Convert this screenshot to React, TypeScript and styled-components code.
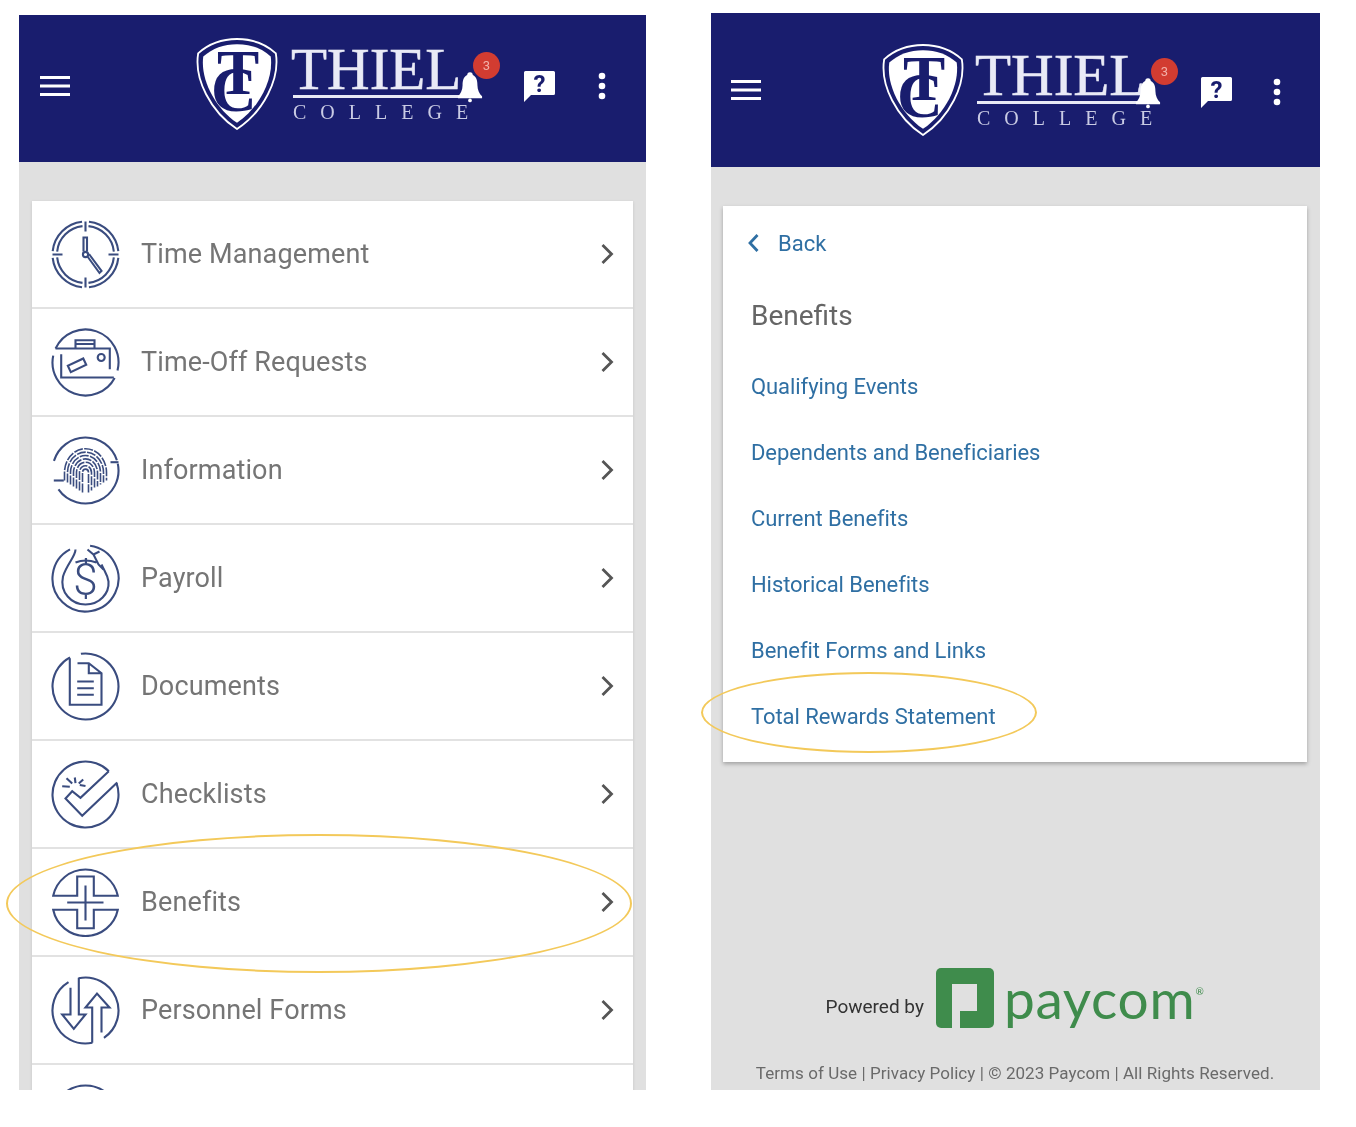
import * as React from 'react';
import { createGlobalStyle, styled } from 'styled-components';

const NAVY = '#191d6e';
const ICON = '#3a4c7f';
const LINK = '#2f6fa3';

const GlobalStyle = createGlobalStyle`
  html, body {
    margin: 0;
    background: #fff;
  }
  body {
    font-family: Roboto, "Liberation Sans", sans-serif;
  }
`;

//arc around the middle of a 68 unit icon, degrees run clockwise from the top
const arc = (r: number, from: number, to: number) => {
  const pt = (deg: number) => {
    const rad = (deg * Math.PI) / 180;
    return `${(34 + r * Math.sin(rad)).toFixed(2)} ${(34 - r * Math.cos(rad)).toFixed(2)}`;
  };
  return `M${pt(from)} A${r} ${r} 0 ${to - from > 180 ? 1 : 0} 1 ${pt(to)}`;
};

const ClockIcon = () => (
  <>
    {[
      [6, 84],
      [96, 174],
      [186, 264],
      [276, 354],
    ].map(([a, b]) => (
      <React.Fragment key={a}>
        <path d={arc(33, a, b)} />
        <path d={arc(28.5, a, b)} />
      </React.Fragment>
    ))}
    <path d="M34 1V11M34 57V67M1 34H11M57 34H67" />
    <path d="M32 31V17H35.5V31" />
    <circle cx="34" cy="34" r="2.6" />
    <path d="M36 36L48 52.5L50 50.5L37.5 33.5" />
  </>
);

const SuitcaseIcon = () => (
  <>
    <path d={arc(33, -65, 104)} />
    <path d={arc(33, 118, 282)} />
    <path d="M4 20H58.3V40.7M9.7 25.7V49H62.3M24 20V11.7H43V20M24 15.5H43" />
    <rect x="17" y="33.2" width="17" height="7" transform="rotate(-25 25.7 36.7)" />
    <circle cx="49.7" cy="29" r="3.5" />
  </>
);

const FingerprintIcon = () => (
  <>
    <path d="M2.3 44H12.3" />
    <path d={arc(33, -73, 72)} />
    <path d="M59 25.7H67" />
    <path d={arc(33, 78, 235)} />
    {[1, 2, 3, 4, 5, 6, 7].map((k) => (
      <path
        key={k}
        d={`M${34 - k * 3} ${58 - k * 2}V36A${k * 3} ${k * 3.4} 0 0 1 ${34 + k * 3} 36V${58 - k * 2}`}
        strokeDasharray="9 1.4"
        strokeWidth="1.6"
      />
    ))}
  </>
);

const MoneyIcon = () => (
  <>
    <path d={arc(33, 8, 332)} />
    <path d="M24 5C24 12 15 20 11.5 32C8 48 20 60 34 60C48 60 58 49 57 37C56 30 53 27 50 20" />
    <path d="M24 18Q34 14 45 18M36 5L42 10L48 7M42 10L47 20L52 25" />
    <BagText x="34" y="50">$</BagText>
  </>
);

const DocumentIcon = () => (
  <>
    <path d={arc(33, -8, 332)} />
    <path d="M18.3 5.7V52.3H50V20.7L37.3 10.7H26M37.3 10.7V20.7H50" />
    <path d="M25.7 29H42.3M25.7 35.7H42.3M25.7 42.3H42.3" />
  </>
);

const CheckIcon = () => (
  <>
    <path d={arc(33, 70, 405)} />
    <path d="M57.3 10.7L29 37.3L20.7 30.7L14 38L30.7 55.3L65.7 22" />
    <path d="M10.7 25.7L18.3 26.3M15 17.7L20.7 23M23.3 17L24 22.7M31.7 19L27.3 23M34 25.5L28.3 24.5" />
  </>
);

const CrossIcon = () => (
  <>
    <path d="M1.7 27.3H25.7V8H42.3V27.3H66.3A33 33 0 0 0 1.7 27.3Z" />
    <path d="M1.7 41.3H25.7V59.7H42.3V41.3H66.3A33 33 0 0 1 1.7 41.3Z" />
    <path d="M34 17V52M15.7 34H52" />
  </>
);

const ArrowsIcon = () => (
  <>
    <path d={arc(33, 168, 329)} />
    <path d={arc(33, 348, 506)} />
    <path d="M40.7 66.3V31H34L45.5 17L58 31H50V56" />
    <path d="M19 11.3V38H10.7L22.3 52.3L34 38H27.3V1.3" />
  </>
);

const RingIcon = () => <circle cx="34" cy="34" r="33" />;

const MENU = [
  { label: 'Time Management', Icon: ClockIcon },
  { label: 'Time-Off Requests', Icon: SuitcaseIcon },
  { label: 'Information', Icon: FingerprintIcon },
  { label: 'Payroll', Icon: MoneyIcon },
  { label: 'Documents', Icon: DocumentIcon },
  { label: 'Checklists', Icon: CheckIcon },
  { label: 'Benefits', Icon: CrossIcon },
  { label: 'Personnel Forms', Icon: ArrowsIcon },
  { label: '', Icon: RingIcon },
];

const BENEFIT_LINKS = [
  'Qualifying Events',
  'Dependents and Beneficiaries',
  'Current Benefits',
  'Historical Benefits',
  'Benefit Forms and Links',
  'Total Rewards Statement',
];

type HeaderProps = {
  height: number;
  padding: string;
  logoLeft: number;
  logoGap: number;
  logoLift: number;
  bellShift: number;
  iconDrop: number;
  kebabGap: number;
};

const Header = ({ height, padding, logoLeft, logoGap, logoLift, bellShift, iconDrop, kebabGap }: HeaderProps) => (
  <TopBar $height={height} $padding={padding}>
    <svg width="30" height="22" viewBox="0 0 30 22">
      <path d="M0 2.5H30M0 11H30M0 19.5H30" stroke="#fff" strokeWidth="3" />
    </svg>
    <Logo $left={logoLeft} $gap={logoGap} $lift={logoLift}>
      <svg width="84" height="92" viewBox="0 0 80 90">
        <path
          d="M40 1C55 1 68 6 78 15C82 40 66 72 40 89C14 72 -2 40 2 15C12 6 25 1 40 1Z"
          fill="none"
          stroke="#fff"
          strokeWidth="1.8"
        />
        <path
          d="M40 6C53 6 64 10 73 18C76 40 62 68 40 83C18 68 4 40 7 18C16 10 27 6 40 6Z"
          fill="#fff"
        />
        <CrestText x="37" y="71" fontSize="62">C</CrestText>
        <CrestText x="41" y="55" fontSize="62">T</CrestText>
      </svg>
      <Wordmark>
        <Thiel>THIEL</Thiel>
        <WordRule />
        <College>COLLEGE</College>
        <Bell $shift={bellShift} width="26" height="34" viewBox="0 0 28 34">
          <path
            d="M14 1C16 1 17 2.500 17 4C21 6 22 10 22 15C22 20 24 24 27 27V29H1V27C4 24 6 20 6 15C6 10 7 6 11 4C11 2.500 12 1 14 1Z"
            fill="#fff"
          />
          <circle cx="14" cy="31.500" r="2" fill="#fff" />
        </Bell>
        <Badge $shift={bellShift}>3</Badge>
      </Wordmark>
    </Logo>
    <HelpIcon $drop={iconDrop} width="33" height="33" viewBox="0 0 33 33">
      <path d="M2.500 1H30.500Q32 1 32 2.500V23.500Q32 25 30.500 25H8L1 32V2.500Q1 1 2.500 1Z" fill="#fff" />
      <HelpMark x="16.500" y="22">?</HelpMark>
    </HelpIcon>
    <KebabIcon $drop={iconDrop} $gap={kebabGap} width="8" height="28" viewBox="0 0 8 28">
      <circle cx="4" cy="4" r="3.300" fill="#fff" />
      <circle cx="4" cy="14" r="3.300" fill="#fff" />
      <circle cx="4" cy="24" r="3.300" fill="#fff" />
    </KebabIcon>
  </TopBar>
);

export default function App() {
  return (
    <Page>
      <GlobalStyle />
      <LeftPhone>
        <Header
          height={147}
          padding="0 40px 5px 21px"
          logoLeft={125}
          logoGap={12}
          logoLift={4}
          bellShift={0}
          iconDrop={0}
          kebabGap={42}
        />
        <PhoneBody>
          <MenuCard>
            {MENU.map(({ label, Icon }) => (
              <MenuRow key={label || 'more'}>
                <MenuIcon viewBox="-0.500 -0.500 69 69">
                  <Icon />
                </MenuIcon>
                <MenuLabel>{label}</MenuLabel>
                {label && (
                  <svg width="14" height="22" viewBox="0 0 14 22">
                    <path d="M2.500 2L11.500 11L2.500 20" fill="none" stroke="#555" strokeWidth="2.800" />
                  </svg>
                )}
              </MenuRow>
            ))}
          </MenuCard>
        </PhoneBody>
      </LeftPhone>

      <RightPhone>
        <Header
          height={154}
          padding="0 39px 0 20px"
          logoLeft={120}
          logoGap={10}
          logoLift={0}
          bellShift={-6}
          iconDrop={4}
          kebabGap={40}
        />
        <PhoneBody>
          <BenefitsCard>
            <BackRow>
              <svg width="13" height="20" viewBox="0 0 13 20">
                <path d="M10.500 2L3 10L10.500 18" fill="none" stroke={LINK} strokeWidth="2.800" />
              </svg>
              Back
            </BackRow>
            <CardTitle>Benefits</CardTitle>
            <LinkList>
              {BENEFIT_LINKS.map((link) => (
                <BenefitLink key={link}>{link}</BenefitLink>
              ))}
            </LinkList>
          </BenefitsCard>
          <Footer>
            <PoweredRow>
              <PoweredBy>Powered by</PoweredBy>
              <svg width="58" height="60" viewBox="0 0 58 60">
                <rect width="58" height="60" rx="5" fill="#3f8c4c" />
                <path d="M16 60V16H41V43H24V60Z" fill="#e0e0e0" />
              </svg>
              <PaycomName>
                paycom<sup>®</sup>
              </PaycomName>
            </PoweredRow>
            <Legal>Terms of Use | Privacy Policy | © 2023 Paycom | All Rights Reserved.</Legal>
          </Footer>
        </PhoneBody>
      </RightPhone>

      <Highlight $left={6} $top={834} $width={626} $height={139} />
      <Highlight $left={701} $top={672} $width={336} $height={81} />
    </Page>
  );
}

const Page = styled.div`
  position: relative;
  width: 1356px;
  height: 1127px;
  box-sizing: border-box;
  padding: 13px 0 0 19px;
  display: flex;
  align-items: flex-start;
  gap: 65px;
  overflow: hidden;
  background: #fff;
`;

const Phone = styled.section`
  display: flex;
  flex-direction: column;
  overflow: hidden;
  background: #e0e0e0;
  filter: blur(0.45px);
`;

const LeftPhone = styled(Phone)`
  width: 627px;
  height: 1075px;
  margin-top: 2px;
`;

const RightPhone = styled(Phone)`
  width: 609px;
  height: 1077px;
`;

const TopBar = styled.header<{ $height: number; $padding: string }>`
  flex: none;
  height: ${(p) => p.$height}px;
  box-sizing: border-box;
  padding: ${(p) => p.$padding};
  display: flex;
  align-items: center;
  background: ${NAVY};
`;

const Logo = styled.div<{ $left: number; $gap: number; $lift: number }>`
  margin: -${(p) => p.$lift}px 0 0 ${(p) => p.$left}px;
  display: flex;
  align-items: center;
  gap: ${(p) => p.$gap}px;
`;

const CrestText = styled.text`
  font-family: 'Liberation Serif', serif;
  font-weight: 700;
  fill: ${NAVY};
  text-anchor: middle;
`;

const Wordmark = styled.div`
  position: relative;
  width: 208px;
  display: flex;
  flex-direction: column;
  color: #e9eaf6;
  font-family: 'Liberation Serif', serif;
`;

const Thiel = styled.div`
  font-size: 59px;
  line-height: 46px;
  letter-spacing: 0;
  -webkit-text-stroke: 0.5px #e9eaf6;
`;

const WordRule = styled.div`
  width: 178px;
  height: 3px;
  margin: 3px 0 0 2px;
  background: #e9eaf6;
`;

const College = styled.div`
  margin: 4px 0 0 2px;
  font-size: 20px;
  line-height: 20px;
  letter-spacing: 14px;
  color: #c9cbe4;
  white-space: nowrap;
`;

const Bell = styled.svg<{ $shift: number }>`
  position: absolute;
  left: ${(p) => 166 + p.$shift}px;
  top: 24px;
`;

const Badge = styled.div<{ $shift: number }>`
  position: absolute;
  left: ${(p) => 182 + p.$shift}px;
  top: 6px;
  width: 27px;
  height: 27px;
  border-radius: 50%;
  background: #d23c31;
  color: #f2b0a8;
  font: 13px/27px Roboto, sans-serif;
  text-align: center;
`;

const HelpIcon = styled.svg<{ $drop: number }>`
  margin: ${(p) => p.$drop}px 0 0 auto;
`;

const HelpMark = styled.text`
  font: 700 24px Roboto, sans-serif;
  fill: ${NAVY};
  text-anchor: middle;
`;

const KebabIcon = styled.svg<{ $drop: number; $gap: number }>`
  margin: ${(p) => p.$drop}px 0 0 ${(p) => p.$gap}px;
`;

const PhoneBody = styled.div`
  flex: 1;
  min-height: 0;
  padding: 39px 13px 0 12px;
  display: flex;
  flex-direction: column;
`;

const MenuCard = styled.div`
  margin-left: 1px;
  background: #fff;
  box-shadow: 0 1px 3px rgba(0, 0, 0, 0.12);
`;

const MenuRow = styled.div`
  height: 106px;
  padding: 0 19px;
  display: flex;
  align-items: center;
  gap: 21px;
  border-bottom: 2px solid #e2e2e2;
`;

const MenuIcon = styled.svg`
  width: 69px;
  height: 69px;
  flex: none;
  fill: none;
  stroke: ${ICON};
  stroke-width: 2.1;
`;

const BagText = styled.text`
  font: 300 44px Roboto, sans-serif;
  fill: ${ICON};
  stroke: none;
  text-anchor: middle;
`;

const MenuLabel = styled.span`
  flex: 1;
  font-size: 27px;
  letter-spacing: 0.13px;
  color: #757575;
  white-space: nowrap;
`;

const BenefitsCard = styled.div`
  height: 556px;
  box-sizing: border-box;
  padding: 0 28px;
  background: #fff;
  box-shadow: 0 2px 4px rgba(0, 0, 0, 0.28);
`;

const BackRow = styled.div`
  height: 74px;
  margin-left: -4px;
  display: flex;
  align-items: center;
  gap: 18px;
  font-size: 22px;
  color: ${LINK};
`;

const CardTitle = styled.h2`
  margin: -2px 0 0;
  height: 74px;
  display: flex;
  align-items: center;
  font-size: 28px;
  font-weight: 400;
  color: #666;
`;

const LinkList = styled.div`
  margin-top: 2px;
  display: flex;
  flex-direction: column;
`;

const BenefitLink = styled.div`
  height: 66px;
  line-height: 66px;
  font-size: 22px;
  letter-spacing: -0.07px;
  color: ${LINK};
  white-space: nowrap;
`;

const Footer = styled.footer`
  margin-top: auto;
  padding-bottom: 6px;
  display: flex;
  flex-direction: column;
  align-items: center;
  gap: 34px;
`;

const PoweredRow = styled.div`
  display: flex;
  align-items: center;
  gap: 12px;
`;

const PoweredBy = styled.span`
  margin-top: 16px;
  font-size: 19px;
  color: #333;
`;

const PaycomName = styled.span`
  margin-left: -2px;
  font-family: Lato, 'Open Sans', sans-serif;
  font-size: 55px;
  line-height: 60px;
  letter-spacing: 0.7px;
  color: #3f8c4c;
  sup {
    font-size: 10px;
    vertical-align: 24px;
    line-height: 0;
  }
`;

const Legal = styled.div`
  font-size: 17px;
  line-height: 22px;
  letter-spacing: 0.06px;
  color: #6a6a6a;
  white-space: nowrap;
`;

const Highlight = styled.div<{ $left: number; $top: number; $width: number; $height: number }>`
  position: absolute;
  left: ${(p) => p.$left}px;
  top: ${(p) => p.$top}px;
  width: ${(p) => p.$width}px;
  height: ${(p) => p.$height}px;
  box-sizing: border-box;
  border: 2px solid #f3c95a;
  border-radius: 50%;
  pointer-events: none;
`;
